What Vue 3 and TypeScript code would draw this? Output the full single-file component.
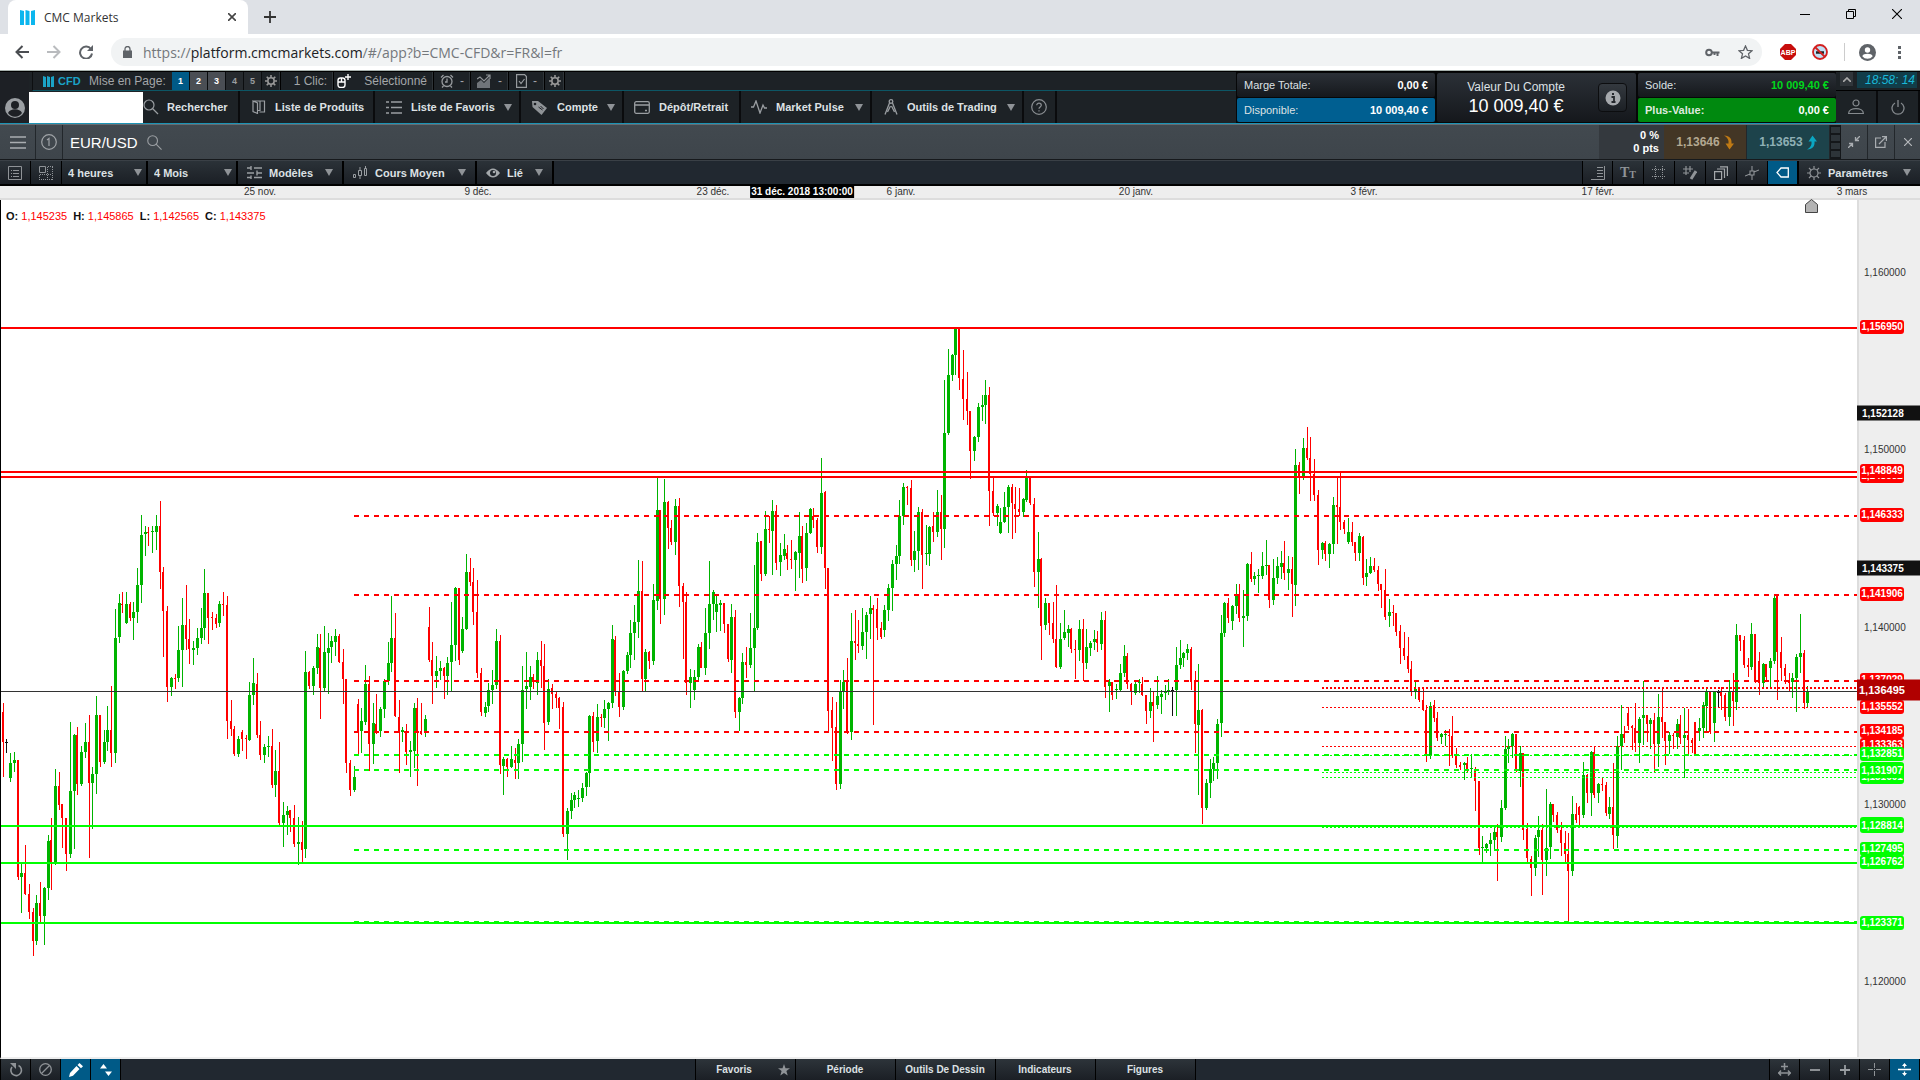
<script setup lang="ts">
import { computed, ref } from 'vue'

type Tone = 'g' | 'r' | 'k'

interface Block {
  x: number
  y: number
  unit: number
  rows: string
}

/* Each row: tone, x, high, body top, body bottom, low. */
const blocks: Block[] = [
  {
    x: 0, y: 450, unit: 3,
    rows: `r 10 759 786 876 981;k 19 867 876 879 909;g 31 909 939 984 996;g 43 906 930 939 966;r 55 930 930 1281 1290;
g 64 1242 1269 1281 1389;r 76 1185 1269 1332 1335;r 88 1302 1332 1386 1407;r 100 1374 1386 1473 1518;g 109 1335 1359 1473 1485;
r 121 1296 1359 1398 1419;g 133 1311 1314 1398 1485;g 145 1155 1173 1314 1350;r 154 1104 1170 1236 1320;g 166 957 1008 1242 1245;
r 178 966 1008 1065 1080;r 187 1062 1062 1104 1194;r 199 1104 1104 1212 1263;g 211 816 1023 1212 1224;g 223 852 855 1023 1197;
r 232 831 855 1002 1035;g 244 888 906 1002 1008;g 256 819 876 906 924;r 268 795 876 999 1224;g 277 951 972 999 1137;
g 289 738 795 972 1032;r 301 795 795 936 951;g 313 840 876 936 942;g 322 768 840 876 903;r 334 708 840 909 951;
g 346 477 564 909 939;g 358 432 459 561 579;r 367 426 462 465 489;g 379 426 462 519 522;r 391 456 462 504 513;
g 400 456 486 504 570;g 412 354 405 486 519;g 424 195 255 405 459;g 436 228 246 252 318;r 445 231 246 249 288;
g 457 228 243 246 309;g 469 195 228 246 300;r 481 153 228 366 417;r 490 351 366 483 621;r 502 468 483 711 756;
g 514 681 684 711 738;r 526 672 684 687 717;g 535 528 600 684 696;g 547 444 525 600 711;r 559 405 525 567 600;
r 568 507 567 597 642;g 580 573 594 600 645;g 592 534 564 594 615;g 604 474 534 564 582;g 613 357 429 534 570;
r 625 429 429 504 582;r 637 486 501 504 540;r 649 492 504 522 534;g 658 453 462 519 531;r 670 426 462 465 498;
r 682 438 465 813 867;r 694 750 813 837 858;r 703 828 837 912 918;g 715 858 867 912 921;r 727 840 846 867 903;
r 739 855 864 867 927;g 748 696 735 870 873;g 760 624 699 735 765;r 772 669 702 855 864;r 781 813 855 915 930;
g 793 882 891 915 939;g 805 858 888 891 921;r 817 837 888 1005 1014;g 826 900 963 1005 1041;r 838 876 963 1119 1125;
g 850 1056 1095 1119 1191;g 862 1068 1083 1095 1155;r 871 1080 1080 1104 1146;r 883 1065 1104 1182 1191;g 895 1101 1176 1182 1245;
r 907 1113 1176 1200 1236;g 916 603 666 1197 1224;r 928 663 666 708 717;g 940 648 654 708 735;g 952 552 591 654 672;
r 961 552 594 714 807;g 973 528 606 714 723;g 985 549 594 609 732;g 994 558 573 591 639;g 1006 537 558 576 618;
r 1018 552 558 636 639;r 1030 597 636 687 762;r 1039 687 687 939 969;r 1051 930 939 1020 1038;g 1063 948 981 1020 1026;
r 1075 747 762 843 915;g 1084 774 813 843 909;g 1096 645 702 816 825;r 1108 678 702 882 963;g 1120 759 819 882 942;
r 1129 732 822 849 852;g 1141 771 777 843 861;g 1153 687 693 777 804;g 1165 576 639 693 705;g 1174 438 564 639 666;
r 1186 489 564 798 801;r 1198 750 801 843 969;g 1207 831 840 846 876;r 1219 822 843 906 945;g 1231 873 900 906 981;
g 1243 759 774 903 954;r 1252 744 774 846 1008;r 1264 759 843 852 855;g 1276 795 807 849 861;r 1288 471 531 630 636;
r 1297 576 630 678 762;g 1309 618 663 678 714;g 1321 633 654 663 690;r 1333 651 654 678 747;g 1342 621 639 678 735;
g 1354 456 585 636 723;g 1366 411 414 585 633;r 1378 414 414 630 645;g 1387 501 537 603 609;g 1399 312 366 537 540;
r 1411 324 366 396 408;r 1420 354 396 486 525;r 1432 390 486 669 684`,
  },
  {
    x: 460, y: 450, unit: 3,
    rows: `r 64 654 669 786 798;g 76 756 771 789 801;g 85 699 720 768 786;g 97 660 705 720 762;g 109 537 573 705 717;
r 121 555 573 945 972;g 130 921 927 948 1035;r 142 924 927 951 981;g 154 888 927 951 954;r 166 894 930 939 987;
g 175 867 882 939 987;g 187 648 720 882 936;g 199 606 708 717 777;g 211 648 681 711 750;r 220 672 681 696 717;
g 232 606 630 699 735;r 244 573 630 648 714;r 253 582 648 819 900;g 265 687 717 816 825;r 277 702 714 732 777;
r 289 726 732 744 774;r 298 741 744 774 837;r 310 756 771 1152 1161;g 322 1074 1083 1152 1230;g 334 1029 1050 1083 1107;
g 343 1026 1035 1050 1074;g 355 1020 1044 1047 1071;g 367 999 1014 1044 1056;g 379 966 969 1011 1038;g 388 795 798 969 1011;
r 400 786 798 876 906;g 412 762 801 873 909;r 424 792 801 804 831;g 433 750 777 804 834;g 445 756 759 777 873;
g 457 525 567 759 774;r 466 558 570 723 738;r 478 669 723 771 801;g 490 660 663 771 780;g 502 606 615 663 672;
g 511 510 549 615 654;g 523 465 516 549 630;g 535 330 423 516 564;r 547 333 423 687 723;g 556 597 606 687 723;
r 568 603 606 633 657;g 580 402 450 633 645;g 592 81 180 453 480;r 601 180 180 447 522;g 613 87 156 447 495;
r 625 153 156 234 297;r 634 210 234 276 285;g 646 147 168 276 315;r 658 144 168 408 471;r 670 399 408 456 627;
r 679 426 456 699 735;g 691 657 681 699 774;g 703 660 681 720 750;g 715 582 591 681 690;r 724 576 591 654 654;
g 736 474 549 654 675;g 748 333 462 549 597;g 760 420 426 462 510;g 769 435 462 486 546;g 781 450 459 465 543;
r 793 459 459 522 549;r 805 522 522 627 636;g 814 462 501 630 669;r 826 480 501 786 804;g 838 741 744 786 843;
g 847 609 636 744 762;r 859 591 636 645 684;g 871 489 594 645 654;g 883 345 534 594 723;g 892 249 276 534 540;
r 904 273 273 372 393;g 916 183 237 372 378;r 928 198 237 240 279;g 937 150 183 243 375;r 949 165 183 339 360;
g 961 279 315 336 378;g 973 252 297 318 330;r 982 285 309 327 360;r 994 270 327 330 357;g 1006 303 306 330 423;
g 1018 186 258 309 384;r 1027 228 258 357 399;g 1039 219 249 354 393;g 1051 174 177 249 252;r 1060 174 198 210 234;
r 1072 204 210 291 309;g 1084 24 129 291 312;r 1096 123 126 354 417;r 1105 354 354 783 846;r 1117 741 780 834 933;
r 1129 756 831 1002 1020;g 1141 690 723 1002 1017;g 1150 660 696 723 777;r 1162 624 696 849 852;g 1174 489 573 846 870;
r 1186 480 573 579 630;r 1195 510 582 588 609;g 1207 474 546 588 600;g 1219 486 495 546 627;g 1231 438 474 492 567;
r 1240 465 474 480 825;r 1252 444 477 534 570;r 1264 516 534 561 567;g 1273 465 480 540 561;g 1285 402 414 480 513;
g 1297 330 342 414 483;g 1309 285 318 342 390;g 1318 150 198 318 342;g 1330 99 111 198 225;r 1342 108 111 114 165;
r 1354 90 114 330 348;g 1363 243 303 330 366;g 1375 171 186 303 360;r 1387 177 186 315 417;g 1399 225 309 312 345;
g 1408 228 231 312 348;r 1420 186 228 246 276;g 1432 120 186 246 261`,
  },
  {
    x: 860, y: 300, unit: 2.904,
    rows: `r 244 566 616 665 755;g 253 232 386 665 720;g 265 142 218 386 392;g 277 157 160 218 235;g 286 81 81 160 218;
r 298 81 81 226 261;r 310 145 229 287 348;r 322 209 287 322 363;r 331 322 322 438 520;g 343 395 398 438 467;
g 355 299 311 398 412;g 367 276 305 311 351;g 376 232 276 305 360;r 388 253 276 555 656;r 400 514 555 618 627;
g 412 592 598 618 656;g 421 604 645 677 679;g 433 558 601 645 648;g 445 537 543 601 677;r 457 534 543 589 694;
r 466 543 592 607 677;r 478 546 607 616 627;g 490 575 578 616 630;g 499 494 514 581 587;r 511 514 514 589 595;
r 523 575 592 790 833;g 535 674 752 790 894;r 544 749 752 947 1045;g 556 865 880 944 958;r 568 880 880 938 973;
r 580 877 938 984 996;r 589 828 984 1066 1069;g 601 938 984 1066 1071;g 613 900 964 981 987;g 625 944 955 967 1008;
r 634 952 955 1013 1025;r 646 987 1013 1016 1101;g 658 929 955 1016 1048;r 670 926 955 1054 1106;g 679 955 1008 1054 1071;
g 691 990 996 1010 1034;g 703 958 984 993 1016;r 712 961 984 996 1022;g 724 906 929 999 1016;r 736 903 929 1124 1156;
g 748 1101 1109 1121 1196;r 757 1109 1109 1147 1161;g 769 1115 1129 1132 1159;g 781 1057 1083 1132 1135;g 793 1002 1034 1083 1095;
r 802 1025 1034 1115 1130;r 814 1112 1115 1138 1176;g 826 1106 1115 1141 1147;g 838 1101 1109 1112 1141;r 847 1095 1115 1147 1150;
r 859 1147 1147 1193 1231;g 871 1127 1167 1193 1214;r 880 1138 1167 1179 1283;g 892 1092 1150 1176 1188;g 904 1132 1144 1153 1202;
g 916 1118 1138 1141 1161;g 925 1101 1132 1135 1147;k 937 1124 1132 1135 1208;g 949 1008 1060 1132 1208;g 961 987 1040 1060 1071;
g 970 1022 1025 1040 1066;g 982 999 1013 1025 1045;r 994 1008 1013 1109 1132;r 1006 1077 1103 1231 1315;g 1015 1057 1191 1234 1437;
r 1027 1188 1191 1475 1522;g 1039 1391 1402 1475 1481;g 1051 1333 1362 1402 1446;g 1060 1327 1344 1362 1397;g 1072 1217 1231 1344 1391;
g 1084 915 967 1228 1269;g 1093 877 880 967 979;r 1105 865 880 923 938;g 1117 886 889 932 958;g 1129 825 857 889 912;
r 1138 825 857 923 935;g 1150 842 918 923 1008;g 1162 764 767 918 932;r 1174 732 767 810 819;g 1183 790 801 810 828;
g 1195 781 799 801 851;g 1207 732 772 801 810;g 1219 697 769 772 799;r 1228 769 769 871 894;g 1240 752 807 871 886;
g 1252 746 772 807 825;g 1264 729 764 775 810;r 1273 700 764 793 813`,
  },
  {
    x: 1280, y: 420, unit: 3,
    rows: `g 25 408 447 459 510;r 37 411 447 492 591;g 46 87 135 495 558;r 58 126 135 171 222;g 70 54 84 171 180;
r 82 21 84 114 120;r 91 51 114 162 243;r 103 117 162 225 243;r 115 210 225 390 435;g 127 366 369 390 417;
r 136 363 369 402 423;g 148 369 372 402 444;g 160 231 255 372 402;r 172 171 255 261 372;r 181 156 261 306 330;
r 193 300 306 327 342;g 205 294 336 366 372;r 217 306 336 366 378;r 226 366 366 399 423;g 238 339 348 399 423;
r 250 348 351 474 495;g 259 417 459 471 498;g 271 411 438 459 462;r 283 414 438 450 456;r 295 438 450 492 513;
r 304 492 492 510 564;r 316 447 510 591 600;g 328 537 576 588 621;r 340 555 576 579 618;r 349 579 579 636 648;
r 361 615 633 684 732;r 373 636 684 708 720;r 385 651 708 747 759;r 394 723 747 813 828;g 406 783 807 813 837;
r 418 801 807 840 846;r 430 801 840 870 873;r 439 855 870 1005 1026;g 451 846 858 1008 1017;r 463 840 855 894 906;
r 472 876 894 954 963;g 484 939 942 951 972;g 496 930 942 945 978;r 508 927 945 948 1038;r 517 888 948 1008 1014;
r 529 984 1008 1035 1044;r 541 1026 1035 1041 1050;g 553 1026 1029 1035 1080;r 562 1011 1029 1050 1056;g 574 1002 1044 1047 1074;
r 586 1041 1050 1083 1173;r 598 1083 1083 1284 1305;g 607 1248 1281 1284 1329;g 619 1269 1272 1284 1299;g 631 1239 1260 1272 1308;
g 643 1221 1236 1260 1287;r 652 1212 1236 1251 1383;g 664 1140 1164 1251 1266;g 676 948 987 1164 1170;g 685 957 978 987 1029;
g 697 939 942 978 1014;r 709 942 942 1050 1056;g 721 978 999 1053 1101;r 730 999 999 1230 1260;r 742 1209 1227 1314 1329;
r 754 1308 1317 1344 1428;g 766 1245 1254 1344 1368;g 775 1188 1230 1251 1311;r 787 1212 1230 1320 1425;g 799 1107 1284 1320 1368;
g 811 1146 1152 1281 1317;r 820 1152 1152 1185 1206;r 832 1176 1185 1230 1239;r 844 1206 1230 1269 1308;r 856 1233 1269 1302 1326;
r 865 1239 1302 1353 1506;g 877 1128 1182 1353 1368;r 889 1149 1182 1200 1209;r 898 1158 1161 1185 1218`,
  },
  {
    x: 1560, y: 480, unit: 3,
    rows: `g 70 846 885 1005 1014;r 82 882 885 939 969;g 94 813 816 939 1008;
r 103 798 816 945 954;g 115 909 912 939 969;r 127 894 912 915 933;r 139 906 915 999 1008;g 148 951 981 1002 1017;
r 160 849 981 1065 1107;g 172 768 798 1068 1104;g 184 675 762 798 870;r 193 738 762 774 789;r 205 681 699 738 750;
r 217 735 738 744 810;r 226 669 744 789 816;g 238 711 717 789 849;g 250 603 705 714 795;r 262 705 705 732 786;
g 271 714 720 732 807;r 283 699 720 792 879;g 295 642 711 792 861;r 307 624 711 726 774;r 316 726 726 783 855;
g 328 756 765 783 822;r 340 759 765 768 807;g 352 717 732 771 807;r 361 705 732 774 792;g 373 684 765 774 894;
r 385 687 765 780 825;r 397 774 780 789 819;r 406 726 726 825 825;g 418 714 744 753 783;g 430 666 675 744 774;
g 439 627 636 678 753;r 451 636 636 756 762;g 463 636 636 729 786;k 475 630 636 639 681;r 484 621 636 648 690;
r 496 639 645 711 723;g 508 600 636 711 738;r 520 579 636 663 738;g 529 432 465 666 690;r 541 465 465 483 513;
r 553 468 480 555 564;r 565 534 555 561 591;g 574 429 462 561 570;r 586 462 462 603 609;r 598 516 543 609 645;
g 610 549 552 609 624;r 619 552 552 591 606;g 631 534 543 564 624;g 643 345 354 543 552;r 652 345 345 516 660;
r 664 471 516 564 603;r 676 552 564 588 612;r 688 579 603 609 636;g 697 579 594 606 654;g 709 522 531 594 696;
g 721 402 519 531 579;r 733 510 519 669 687;g 742 618 636 669 684`,
  },
]

const bar = (x: number, y: number, w: number, h: number) => `M${x} ${y}h${w}v${h}h${-w}z`

const candles = computed(() => {
  const paths: Record<Tone, string> = { g: '', r: '', k: '' }
  for (const b of blocks) {
    for (const row of b.rows.split(';')) {
      const [tone, ...raw] = row.trim().split(' ')
      const n = raw.map(Number)
      const x = b.x + Math.floor(n[0] / 3)
      const [hi, top, bottom, lo] = n.slice(1).map((v) => b.y + Math.round(v / b.unit))
      const t = tone as Tone
      paths[t] += bar(x, hi, 1, Math.max(1, lo - hi))
      paths[t] += bar(x - 1, top, t === 'r' ? 2 : 3, Math.max(1, bottom - top))
    }
  }
  return paths
})

const RED = '#ff0000'
const GREEN = '#00ff00'
const levels = [
  { x: 1, y: 328, w: 2, c: RED, d: '' },
  { x: 1, y: 472, w: 2, c: RED, d: '' },
  { x: 1, y: 477, w: 2, c: RED, d: '' },
  { x: 354, y: 516, w: 2, c: RED, d: '5 5' },
  { x: 354, y: 595, w: 2, c: RED, d: '5 5' },
  { x: 354, y: 681, w: 2, c: RED, d: '5 5' },
  { x: 354, y: 732, w: 2, c: RED, d: '5 5' },
  { x: 1322, y: 688, w: 2, c: RED, d: '2 2' },
  { x: 1322, y: 707.5, w: 1, c: RED, d: '2 2' },
  { x: 1322, y: 746.5, w: 1, c: RED, d: '2 2' },
  { x: 354, y: 755, w: 2, c: GREEN, d: '5 5' },
  { x: 354, y: 770, w: 2, c: GREEN, d: '5 5' },
  { x: 354, y: 850, w: 2, c: GREEN, d: '5 5' },
  { x: 354, y: 922, w: 2, c: GREEN, d: '5 5' },
  { x: 1322, y: 755.5, w: 1, c: GREEN, d: '2 2' },
  { x: 1322, y: 772.5, w: 1, c: GREEN, d: '2 2' },
  { x: 1322, y: 777.5, w: 1, c: GREEN, d: '2 2' },
  { x: 1322, y: 827.5, w: 1, c: GREEN, d: '2 2' },
  { x: 1, y: 826, w: 2, c: GREEN, d: '' },
  { x: 1, y: 863, w: 2, c: GREEN, d: '' },
  { x: 1, y: 923, w: 2, c: GREEN, d: '' },
]

const priceTop = (p: number) => `${(((73 + (1.16 - p) * 17735) / 857) * 100).toFixed(3)}%`
const label = (p: number) => p.toFixed(6).replace('.', ',')
const ticks = [1.16, 1.15, 1.14, 1.13, 1.12]
const tags = [
  { p: 1.15695, k: 'red' },
  { p: 1.148552, k: 'red' },
  { p: 1.148849, k: 'red' },
  { p: 1.146333, k: 'red' },
  { p: 1.141906, k: 'red' },
  { p: 1.137029, k: 'red' },
  { p: 1.135552, k: 'red' },
  { p: 1.134185, k: 'red' },
  { p: 1.133363, k: 'red' },
  { p: 1.132851, k: 'green' },
  { p: 1.131601, k: 'green' },
  { p: 1.132051, k: 'green' },
  { p: 1.131907, k: 'green' },
  { p: 1.128914, k: 'green' },
  { p: 1.128814, k: 'green' },
  { p: 1.127495, k: 'green' },
  { p: 1.126762, k: 'green' },
  { p: 1.123371, k: 'green' },
  { p: 1.152128, k: 'black' },
  { p: 1.143375, k: 'black' },
  { p: 1.136495, k: 'last' },
]

const dates = [
  { t: '25 nov.', x: 260 },
  { t: '9 déc.', x: 478 },
  { t: '23 déc.', x: 713 },
  { t: '6 janv.', x: 901 },
  { t: '20 janv.', x: 1136 },
  { t: '3 févr.', x: 1364 },
  { t: '17 févr.', x: 1598 },
  { t: '3 mars', x: 1852 },
]
const pct = (x: number) => `${((x / 1920) * 100).toFixed(3)}%`

const page = ref(1)
const period = ref('4 heures')
const span = ref('4 Mois')
const ohlc = [
  ['O:', '1,145235'],
  ['H:', '1,145865'],
  ['L:', '1,142565'],
  ['C:', '1,143375'],
]
const teeth = 'M7 0v3M7 11v3M0 7h3M11 7h3M2 2l2.2 2.2M9.8 9.8L12 12M12 2L9.8 4.2M4.2 9.8L2 12'
</script>

<template>
  <div class="page">
    <header class="browser">
      <div class="tabs">
        <div class="tab">
          <svg width="15" height="15" viewBox="0 0 15 15"><path d="M0 0l4 1v14H0zM5.5 0l4 1v14h-4zM11 1l4-1v15h-4z" fill="#0cb6ee" /></svg>
          <span class="tab-name">CMC Markets</span>
          <button class="plain" aria-label="Fermer l’onglet"><svg width="8" height="8" viewBox="0 0 8 8"><path d="M0 0l8 8M8 0L0 8" stroke="#444" stroke-width="1.6" /></svg></button>
        </div>
        <button class="plain newtab" aria-label="Nouvel onglet"><svg width="12" height="12" viewBox="0 0 12 12"><path d="M6 0v12M0 6h12" stroke="#333" stroke-width="1.8" /></svg></button>
        <div class="winctl">
          <button class="plain" aria-label="Réduire"><svg width="10" height="10" viewBox="0 0 10 10"><path d="M0 5.500h10" stroke="#000" /></svg></button>
          <button class="plain" aria-label="Restaurer"><svg width="10" height="10" viewBox="0 0 10 10"><path d="M.5 2.500h7v7h-7zM2.500 2.500v-2h7v7h-2" fill="none" stroke="#000" /></svg></button>
          <button class="plain" aria-label="Fermer"><svg width="10" height="10" viewBox="0 0 10 10"><path d="M0 0l10 10M10 0L0 10" stroke="#000" stroke-width="1.1" /></svg></button>
        </div>
      </div>
      <div class="address">
        <button class="plain" aria-label="Précédent"><svg width="14" height="14" viewBox="0 0 14 14"><path d="M14 7H1.500M7.500 1L1.500 7l6 6" fill="none" stroke="#4a4d51" stroke-width="2" /></svg></button>
        <button class="plain" aria-label="Suivant"><svg width="14" height="14" viewBox="0 0 14 14"><path d="M0 7h12.500M6.500 1l6 6-6 6" fill="none" stroke="#b9bbbe" stroke-width="2" /></svg></button>
        <button class="plain" aria-label="Actualiser"><svg width="14" height="14" viewBox="0 0 14 14"><path d="M12 4.200A6 6 0 1 0 13 8.500" fill="none" stroke="#5f6368" stroke-width="2" /><path d="M14 0v6H8z" fill="#5f6368" /></svg></button>
        <div class="url">
          <svg width="9" height="12" viewBox="0 0 9 12"><path d="M0 4.500h9V12H0z" fill="#5f6368" /><path d="M2 5V3a2.500 2.500 0 0 1 5 0v2" fill="none" stroke="#5f6368" stroke-width="1.3" /></svg>
          <span class="link">https://<b>platform.cmcmarkets.com</b>/#/app?b=CMC-CFD&amp;r=FR&amp;l=fr</span>
          <svg width="15" height="9" viewBox="0 0 15 9"><circle cx="4" cy="4.500" r="2.800" fill="none" stroke="#5f6368" stroke-width="2" /><path d="M7 4.500h7.500M12.500 4.500v3.500M9.500 4.500V7" stroke="#5f6368" stroke-width="2" /></svg>
          <svg width="15" height="14" viewBox="0 0 15 14"><path d="M7.500 1l1.900 4.300 4.600.4-3.500 3.100 1.100 4.600-4.100-2.500-4.100 2.500 1.100-4.600L1 5.700l4.600-.4z" fill="none" stroke="#5f6368" stroke-width="1.3" /></svg>
        </div>
        <div class="ext">
          <svg width="16" height="16" viewBox="0 0 16 16"><path d="M5 0h6l5 5v6l-5 5H5l-5-5V5z" fill="#c70d0c" /><text x="8" y="11" font-size="7" font-weight="700" fill="#fff" text-anchor="middle" font-family="Liberation Sans, sans-serif">ABP</text></svg>
          <svg width="16" height="16" viewBox="0 0 16 16"><circle cx="8" cy="8" r="7" fill="#bfe0f5" stroke="#d32020" stroke-width="1.8" /><path d="M4 8.500h8" stroke="#222" stroke-width="2.5" /><path d="M3 3l10 10" stroke="#d32020" stroke-width="1.8" /></svg>
          <i class="vline"></i>
          <svg class="avatar" width="17" height="17" viewBox="0 0 17 17"><circle cx="8.500" cy="8.500" r="8.500" fill="#5f6368" /><circle cx="8.500" cy="6" r="2.700" fill="#fff" /><path d="M3.300 12.200c1-3.200 9.400-3.200 10.400 0a6.500 6.500 0 0 1-10.400 0z" fill="#fff" /></svg>
          <svg width="3" height="13" viewBox="0 0 3 13"><path d="M0 0h3v3H0zM0 5h3v3H0zM0 10h3v3H0z" fill="#5f6368" /></svg>
        </div>
      </div>
    </header>

    <section class="app-head">
      <div class="user"><svg width="20" height="20" viewBox="0 0 20 20"><circle cx="10" cy="10" r="10" fill="#9b9fa3" /><circle cx="10" cy="7" r="4" fill="#1d2025" /><path d="M3 15c2-5 12-5 14 0a8.500 8.500 0 0 1-14 0z" fill="#1d2025" /></svg></div>
      <div class="head-main">
        <div class="row1">
          <svg class="cmc" width="11" height="11" viewBox="0 0 11 11"><path d="M0 0l3 1v10H0zM4 0l3 1v10H4zM8 1l3-1v11H8z" fill="#1ba3c6" /></svg>
          <span class="cfd">CFD</span>
          <span class="mise">Mise en Page:</span>
          <button v-for="n in 5" :key="n" class="pg" :class="{ on: n === page, mid: n === 2 || n === 3 }" @click="page = n">{{ n }}</button>
          <span class="cell w19"><svg width="12" height="12" viewBox="0 0 14 14" fill="none" stroke="#999" stroke-width="1.8"><circle cx="7" cy="7" r="3.700" /><path :d="teeth" /></svg></span>
          <span class="cell txt w53">1 Clic:</span>
          <span class="mouse"><svg width="14" height="14" viewBox="0 0 14 14"><rect x="1" y="4" width="7" height="9.500" rx="2.500" fill="none" stroke="#fff" stroke-width="1.4" /><path d="M1 8h7M4.500 4v4M11 0v6M8 3h6" stroke="#fff" stroke-width="1.4" /></svg></span>
          <span class="cell txt w80">Sélectionné</span>
          <span class="cell w37"><svg width="14" height="14" viewBox="0 0 14 14" fill="none" stroke="#979b9e" stroke-width="1.3"><circle cx="7" cy="7.500" r="5" /><path d="M7 4.500V8H5M1 3.500L3.500 1M13 3.500L10.500 1M3.500 12L2 13.500M10.500 12l1.500 1.500" /></svg>-</span>
          <span class="cell w38"><svg width="15" height="14" viewBox="0 0 15 14"><path d="M0 14v-5l4-3 3 3 5-5 1 1v9z" fill="#70757a" /><path d="M0 5l3-2 4 4 6-6M9 1h4v4" fill="none" stroke="#8d9194" stroke-width="1.2" /></svg>-</span>
          <span class="cell w36"><svg width="11" height="14" viewBox="0 0 11 14" fill="none" stroke="#979b9e" stroke-width="1.2"><path d="M.6.6h8l1.800 2v10.800H.6zM3 7l2 2.500L8.500 5" /></svg>-</span>
          <span class="cell w20"><svg width="12" height="12" viewBox="0 0 14 14" fill="none" stroke="#999" stroke-width="1.8"><circle cx="7" cy="7" r="3.700" /><path :d="teeth" /></svg></span>
        </div>
        <nav class="row2">
          <div class="blank"></div>
          <button class="nav n1"><svg width="16" height="16" viewBox="0 0 16 16" fill="none" stroke="#9a9ea2" stroke-width="1.2"><circle cx="6" cy="6" r="5" /><path d="M9.500 9.500L15 15" /></svg>Rechercher</button>
          <button class="nav n2"><svg width="14" height="14" viewBox="0 0 14 14" fill="none" stroke="#9a9ea2" stroke-width="1.2"><path d="M1 1l4.500 2v10.500L1 11.500zM1 1h7v9.500H6M8 1h4.500v11H7.500" /></svg>Liste de Produits</button>
          <button class="nav n3"><svg width="16" height="13" viewBox="0 0 16 13"><path d="M0 1h3M5 1h11M0 6.500h3M5 6.500h11M0 12h3M5 12h11" stroke="#9a9ea2" stroke-width="1.4" /></svg>Liste de Favoris<i class="arr"></i></button>
          <button class="nav n4"><svg width="17" height="15" viewBox="0 0 17 15"><path d="M1 1h6l9 7-5.500 7L1.500 7z" fill="#8f9397" /><circle cx="4" cy="4" r="1.300" fill="#1d2025" /><path d="M7.500 7l4 3M9.500 6l3 3" stroke="#1d2025" /></svg>Compte<i class="arr"></i></button>
          <button class="nav n5"><svg width="16" height="13" viewBox="0 0 16 13" fill="none" stroke="#9a9ea2" stroke-width="1.3"><rect x=".7" y=".7" width="14.600" height="11.600" rx="1.500" /><path d="M1 4h14M11 9.500h2" /></svg>Dépôt/Retrait</button>
          <button class="nav n6"><svg width="16" height="14" viewBox="0 0 16 14" fill="none" stroke="#9a9ea2" stroke-width="1.3"><path d="M0 7h2.500L5 1l4 12 3-8 1.500 3H16" /></svg>Market Pulse<i class="arr"></i></button>
          <button class="nav n7"><svg width="14" height="16" viewBox="0 0 14 16" fill="none" stroke="#9a9ea2" stroke-width="1.3"><circle cx="7" cy="2.500" r="1.800" /><path d="M5.500 4L1 15.500M8.500 4L13 15.500M6.500 7L3.500 13M7.500 7l3 6" /></svg>Outils de Trading<i class="arr"></i></button>
          <button class="nav n8" aria-label="Aide"><svg width="16" height="16" viewBox="0 0 16 16" fill="none" stroke="#8a8e92" stroke-width="1.2"><circle cx="8" cy="8" r="7.300" /><path d="M5.700 6.300c0-3 4.600-3 4.600 0C10.300 8 8 8 8 9.800M8 11.200v1.300" /></svg></button>
        </nav>
      </div>
      <div class="account">
        <div class="pair">
          <div class="box"><span>Marge Totale:</span><b>0,00 €</b></div>
          <div class="box blue"><span>Disponible:</span><b>10 009,40 €</b></div>
        </div>
        <div class="value">
          <div class="value-txt"><span>Valeur Du Compte</span><strong>10 009,40 €</strong></div>
          <button class="info" aria-label="Informations"><svg width="16" height="16" viewBox="0 0 16 16"><circle cx="8" cy="8" r="7.500" fill="#a6a9ad" /><path d="M6.500 7H9v5M6.500 12h4M7 4h2" stroke="#25282d" stroke-width="1.8" fill="none" /></svg></button>
        </div>
        <div class="pair">
          <div class="box"><span>Solde:</span><b class="pos">10 009,40 €</b></div>
          <div class="box grn"><b class="soft">Plus-Value:</b><b>0,00 €</b></div>
        </div>
      </div>
      <div class="sys">
        <div class="sys-top">
          <button class="up" aria-label="Replier"><svg width="8" height="5" viewBox="0 0 8 5"><path d="M0 5l4-4 4 4" fill="none" stroke="#aaa" stroke-width="1.6" /></svg></button>
          <time class="clock">18:58: 14</time>
        </div>
        <div class="sys-bot">
          <button aria-label="Profil"><svg width="16" height="16" viewBox="0 0 16 16" fill="none" stroke="#858a8e" stroke-width="1.2"><circle cx="8" cy="4" r="3" /><path d="M.6 14.500c0-6.500 14.800-6.500 14.800 0z" /></svg></button>
          <button aria-label="Déconnexion"><svg width="14" height="15" viewBox="0 0 14 15" fill="none" stroke="#858a8e" stroke-width="1.3"><path d="M7 0v7M4 3a6 6 0 1 0 6 0" /></svg></button>
        </div>
      </div>
    </section>

    <section class="title">
      <button class="sq w36" aria-label="Menu"><svg width="16" height="13" viewBox="0 0 16 13"><path d="M0 1h16M0 6.500h16M0 12h16" stroke="#a9adb1" stroke-width="1.6" /></svg></button>
      <button class="sq w27" aria-label="Groupe 1"><svg width="16" height="16" viewBox="0 0 16 16" fill="none" stroke="#a0a4a8" stroke-width="1.2"><circle cx="8" cy="8" r="7.300" /><path d="M6 6l2-1.500V12" /></svg></button>
      <h1>EUR/USD</h1>
      <svg class="find" width="15" height="15" viewBox="0 0 16 16" fill="none" stroke="#9a9ea2" stroke-width="1.2"><circle cx="6" cy="6" r="5.200" /><path d="M9.700 9.700L15.500 15.500" /></svg>
      <div class="pts"><span>0 %</span><span>0 pts</span></div>
      <button class="price sell">1,13646<svg width="10" height="15" viewBox="0 0 10 14"><path d="M0 0c6 .5 8 3.500 7.500 8H10l-4.500 6L1.500 8h3C5 4.500 3.500 2 0 0z" fill="#c07a14" /></svg></button>
      <button class="price buy">1,13653<svg width="10" height="15" viewBox="0 0 10 14"><path d="M0 14c6-.5 8-3.500 7.500-8H10L5.500 0l-4 6h3c.5 3.500-1 6-4.500 8z" fill="#0ba6c2" /></svg></button>
      <div class="dots"><i></i><i></i><i></i><i></i></div>
      <button class="sq w27" aria-label="Réduire le module"><svg width="12" height="12" viewBox="0 0 12 12" fill="none" stroke="#a9adb1" stroke-width="1.3"><path d="M12 0L8 4M7.500 1v3.500H11M0 12l4-4M1 7.500h3.500V11" /></svg></button>
      <button class="sq w27" aria-label="Détacher"><svg width="12" height="12" viewBox="0 0 12 12" fill="none" stroke="#a9adb1" stroke-width="1.2"><path d="M6 2H.6v9.400H10V6M4 8l7-7M7 .6h4.400V5" /></svg></button>
      <button class="sq w25" aria-label="Fermer le module"><svg width="8" height="8" viewBox="0 0 8 8"><path d="M0 0l8 8M8 0L0 8" stroke="#b5b8bb" stroke-width="1.2" /></svg></button>
    </section>

    <section class="tools">
      <button class="t w31" aria-label="Liste"><svg width="14" height="14" viewBox="0 0 14 14" fill="none" stroke="#8f9397"><path d="M.5.5h13v13H.5zM3 4.500h1M5 4.500h6M3 7.500h1M5 7.500h6M3 10.500h1M5 10.500h6" /></svg></button>
      <button class="t w31" aria-label="Grille"><svg width="14" height="14" viewBox="0 0 14 14" fill="none" stroke="#8f9397"><path d="M.5.5h6v6h-6z" /><path d="M9 .5h5M13.500 1v13M.5 9v5M0 13.500h14M8.500 1v12M1 8.500h12" stroke-dasharray="1 1" /></svg></button>
      <label class="t sel w86"><select v-model="period" aria-label="Intervalle"><option>4 heures</option><option>1 jour</option></select><i class="arr"></i></label>
      <label class="t sel w90"><select v-model="span" aria-label="Durée"><option>4 Mois</option><option>6 Mois</option></select><i class="arr"></i></label>
      <button class="t pad w106"><svg width="15" height="13" viewBox="0 0 15 13" fill="none" stroke="#9a9ea2" stroke-width="1.4"><path d="M0 2h4M4 0v4M7 2h8M0 7h7M10 7h5M10 4.500v5M0 11.500h4M4 9.500V13M7 11.500h8" /></svg>Modèles<i class="arr"></i></button>
      <button class="t pad w133"><svg width="15" height="13" viewBox="0 0 15 13" fill="none" stroke="#9a9ea2"><path d="M.5 8.500h2v3h-2zM5.500 4.500h3v5h-3zM7 1v3.500M7 9.500V13M11.500 2.500h2v7h-2zM12.500 0v2" /></svg>Cours Moyen<i class="arr"></i></button>
      <button class="t pad w77"><svg width="14" height="10" viewBox="0 0 14 10"><path d="M0 5q7-9 14 0-7 9-14 0z" fill="#a4a8ab" /><circle cx="7" cy="5" r="3" fill="#1f252b" /><circle cx="8" cy="4" r="1.300" fill="#a4a8ab" /></svg>Lié<i class="arr"></i></button>
      <span class="grow"></span>
      <button class="t w31 bl" aria-label="Échelle"><svg width="14" height="14" viewBox="0 0 14 14" fill="none" stroke="#8f9397"><path d="M13.500 0v13.500H0M6 1.500h6M6 4.500h6M6 7.500h6M6 10.500h6" /></svg></button>
      <button class="t w31 serif" aria-label="Texte">T<small>T</small></button>
      <button class="t w31" aria-label="Quadrillage"><svg width="14" height="14" viewBox="0 0 14 14" fill="none" stroke="#8f9397" stroke-dasharray="1 1"><path d="M3.500 0v14M10.500 0v14M0 3.500h14M0 10.500h14" /></svg></button>
      <button class="t w31" aria-label="Dessin"><svg width="14" height="14" viewBox="0 0 14 14" fill="none" stroke="#8f9397" stroke-width="1.2"><path d="M3 0v9M7 0v6M0 3h10M0 7h6" /><path d="M13 5l-5 8" stroke-width="3" /></svg></button>
      <button class="t w31" aria-label="Calques"><svg width="14" height="14" viewBox="0 0 14 14" fill="none" stroke="#a4a8ab" stroke-width="1.2"><path d="M.6 5.600h7v8h-7zM3 3h7.500v9M6 .8h7.400V10" /></svg></button>
      <button class="t w31" aria-label="Repère"><svg width="14" height="14" viewBox="0 0 14 14" fill="none" stroke="#8f9397" stroke-width="1.1"><path d="M5 5h4v4H5zM7 0v5M7 9v5M0 10l5-2M9 6l5-2" /></svg></button>
      <button class="t w31 act" aria-label="Étiquette"><svg width="13" height="11" viewBox="0 0 13 11" fill="none" stroke="#fff" stroke-width="1.3"><path d="M5 1h7.300v9H5L1 5.500z" /></svg></button>
      <button class="t pad params"><svg width="14" height="14" viewBox="0 0 14 14" fill="none" stroke="#8f9397" stroke-width="1.2"><circle cx="7" cy="7" r="4" /><path :d="teeth" /></svg>Paramètres<i class="arr"></i></button>
    </section>

    <div class="dates">
      <span v-for="d in dates" :key="d.t" :style="{ left: pct(d.x) }">{{ d.t }}</span>
      <b :style="{ left: pct(802) }">31 déc. 2018 13:00:00</b>
    </div>

    <main class="chart">
      <div class="plot">
        <svg class="canvas" viewBox="1 200 1856 857" preserveAspectRatio="none" shape-rendering="crispEdges" role="img" aria-label="Cours EUR/USD">
          <path :d="candles.g" fill="#00b400" />
          <path :d="candles.r" fill="#ff0000" />
          <path :d="candles.k" fill="#111" />
          <line v-for="(l, i) in levels" :key="i" :x1="l.x" x2="1857" :y1="l.y" :y2="l.y" :stroke="l.c" :stroke-width="l.w" :stroke-dasharray="l.d || undefined" />
          <line x1="1" x2="1857" y1="691.5" y2="691.5" stroke="#333" />
        </svg>
        <p class="ohlc"><span v-for="o in ohlc" :key="o[0]"><b>{{ o[0] }}</b> {{ o[1] }}</span></p>
        <svg class="home" width="13" height="14" viewBox="0 0 13 14"><path d="M.5 13.500V5.500l6-5 6 5v8z" fill="#b4b4b4" stroke="#444" /></svg>
      </div>
      <div class="axis">
        <span v-for="p in ticks" :key="p" class="tick" :style="{ top: priceTop(p) }">{{ label(p) }}</span>
        <span v-for="g in tags" :key="g.p" class="tag" :class="g.k" :style="{ top: priceTop(g.p) }">{{ label(g.p) }}</span>
      </div>
    </main>

    <footer class="foot">
      <div class="grp">
        <button aria-label="Rétablir"><svg width="14" height="14" viewBox="0 0 14 14"><path d="M9.500 2.500A5.300 5.300 0 1 1 3 4" fill="none" stroke="#8f9397" stroke-width="1.6" /><path d="M1 0h6v6z" fill="#8f9397" /></svg></button>
        <button aria-label="Aucun"><svg width="13" height="13" viewBox="0 0 13 13" fill="none" stroke="#8f9397" stroke-width="1.3"><circle cx="6.500" cy="6.500" r="5.800" /><path d="M2.500 10.500l8-8" /></svg></button>
        <button class="act" aria-label="Crayon"><svg width="14" height="14" viewBox="0 0 14 14"><path d="M0 14l1-4 6.500-7 3 3L4 12.800zM8.500 2L10.500 0 14 3.300 12 5.300z" fill="#fff" /></svg></button>
        <button class="act" aria-label="Déplacer"><svg width="12" height="12" viewBox="0 0 12 12"><path d="M0 4.500L3.500 0 7 4.500zM5 7.500h7L8.500 12z" fill="#fff" /></svg></button>
      </div>
      <div class="grp center">
        <button>Favoris<svg class="star" width="12" height="12" viewBox="0 0 12 12"><path d="M6 0l1.500 4.300H12L8.400 7 9.700 11.600 6 8.900l-3.700 2.700L3.600 7 0 4.300h4.500z" fill="#8f9397" /></svg></button>
        <button>Période</button>
        <button>Outils De Dessin</button>
        <button>Indicateurs</button>
        <button>Figures</button>
      </div>
      <div class="grp right">
        <button aria-label="Ajuster"><svg width="13" height="13" viewBox="0 0 13 13" fill="none" stroke="#8f9397" stroke-width="1.5"><path d="M6.500 0v7M3 3.500h7M0 10h13M3 7.500L.8 10 3 12.500M10 7.500l2.200 2.500-2.200 2.500" /></svg></button>
        <button aria-label="Zoom arrière"><svg width="10" height="10" viewBox="0 0 10 10"><path d="M0 5h10" stroke="#9a9ea2" stroke-width="1.8" /></svg></button>
        <button aria-label="Zoom avant"><svg width="10" height="10" viewBox="0 0 10 10"><path d="M0 5h10M5 0v10" stroke="#9a9ea2" stroke-width="1.8" /></svg></button>
        <button aria-label="Réticule"><svg width="13" height="13" viewBox="0 0 13 13"><path d="M0 6.500h5M8 6.500h5M6.500 0v5M6.500 8v5M6 6.500h1" stroke="#8f9397" /></svg></button>
        <button class="act" aria-label="Échelle auto"><svg width="13" height="13" viewBox="0 0 13 13"><path d="M0 6.500h13M6.500 1v3.500M6.500 8.500V12" stroke="#fff" stroke-width="1.3" /><path d="M6.500 0L9 3H4zM6.500 13L4 10h5z" fill="#fff" /></svg></button>
      </div>
    </footer>
  </div>
</template>

<style scoped>
.page {
  display: flex;
  flex-direction: column;
  min-height: 100vh;
  background: #fff;
  font-family: 'Liberation Sans', Arial, sans-serif;
  font-size: 11px;
  color: #dde1e4;
}
button {
  border: 0;
  margin: 0;
  padding: 0;
  background: none;
  color: inherit;
  font: inherit;
}
svg { flex: none; display: block; }
.plain { display: flex; }

/* browser chrome */
.browser { font-family: 'Open Sans', 'Noto Sans', sans-serif; color: #333; }
.tabs { display: flex; height: 34px; background: #dee1e6; align-items: center; }
.tab {
  display: flex;
  flex: none;
  align-items: center;
  align-self: stretch;
  width: 240px;
  box-sizing: border-box;
  margin-left: 8px;
  padding: 0 12px;
  border-radius: 8px 8px 0 0;
  background: #fff;
  font-size: 12px;
}
.tab-name { flex: 1; margin-left: 9px; }
.newtab { flex: none; margin-left: 16px; }
.winctl { display: flex; gap: 36px; margin: 0 18px 6px auto; }
.address { display: flex; align-items: center; height: 36px; padding: 0 19px 0 15px; border-bottom: 1px solid #a7b1ad; gap: 18px; }
.url {
  display: flex;
  align-items: center;
  flex: 1;
  height: 28px;
  padding: 0 9px 0 12px;
  border-radius: 14px;
  background: #f1f3f4;
  font-size: 14px;
  color: #74787c;
  gap: 18px;
}
.link { flex: 1; margin-left: -7px; }
.link b { font-weight: 400; color: #202124; }
.ext { display: flex; align-items: center; gap: 16px; }
.avatar { margin: 0 6px 0 -2px; }
.vline { width: 1px; height: 18px; background: #ccc; }

/* platform header */
.app-head { display: flex; height: 51px; background: #1d2226; border-top: 1px solid #000; border-bottom: 1px solid #1d93b4; }
.user { display: flex; width: 29px; flex: none; justify-content: flex-end; align-items: flex-end; padding: 0 4px 5px 0; box-sizing: border-box; background: #1d2025; }
.head-main { display: flex; flex-direction: column; flex: 1; min-width: 0; }
.row1 { display: flex; height: 18px; align-items: center; margin-left: 3px; border-bottom: 1px solid #0c5665; color: #a3a6a9; font-size: 12px; border-left: 1px solid #0d0f11; }
.cmc { margin-left: 10px; }
.cfd { width: 31px; margin-left: 4px; color: #1ba3c6; font-size: 11px; font-weight: 700; }
.mise { width: 83px; white-space: nowrap; }
.pg { width: 18px; height: 18px; border-right: 1px solid #0b0d0f; font-size: 9px; font-weight: 700; color: #9a9da0; background: #262a2e; }
.pg.mid { background: #4a4e54; color: #fff; }
.pg.on { background: #005a87; color: #fff; }
.cell { display: flex; height: 18px; box-sizing: border-box; align-items: center; justify-content: center; gap: 6px; border-right: 1px solid #000; box-shadow: inset -1px 0 #2e3438; white-space: nowrap; }
.cell.txt { justify-content: flex-end; padding-right: 6px; }
.w19 { width: 19px; }
.w20 { width: 20px; }
.w36 { width: 36px; }
.w37 { width: 37px; }
.w38 { width: 38px; }
.w53 { width: 53px; }
.w80 { width: 80px; }
.mouse { width: 20px; padding-left: 3px; box-sizing: border-box; }
.row2 { display: flex; flex: 1; align-items: stretch; font-weight: 700; }
.blank { width: 114px; background: #fff; margin-top: 1px; }
.nav { display: flex; align-items: center; border-right: 2px solid #0a0b0d; box-sizing: border-box; white-space: nowrap; }
.nav svg { margin-right: 9px; }
.nav .arr { margin-left: auto; margin-right: 7px; }
.n1 { width: 97px; }
.n2 { width: 135px; padding-left: 12px; }
.n3 { width: 146px; padding-left: 11px; }
.n4 { width: 103px; padding-left: 10px; }
.n5 { width: 117px; padding-left: 10px; }
.n6 { width: 131px; padding-left: 10px; }
.n7 { width: 152px; padding-left: 12px; }
.n8 { width: 33px; padding-left: 7px; }
.n1 svg { margin-right: 8px; }
.n8 svg { margin: 0; }
.arr { width: 0; height: 0; border: 4px solid transparent; border-top: 7px solid #8f9397; border-bottom: 0; }
.account { display: flex; gap: 2px; width: 600px; flex: none; padding: 1px 0 1px 0; background: #060708; }
.pair { display: flex; flex-direction: column; gap: 1px; width: 198px; }
.pair:first-child { margin-left: 1px; }
.box { display: flex; flex: 1; align-items: center; justify-content: space-between; padding: 0 7px; border-radius: 2px; background: linear-gradient(#2b3037, #15181c); }
.box b { color: #fff; }
.box .soft { color: #dfe9df; }
.box .pos { color: #00d81c; }
.blue { background: #005f91; }
.grn { background: #00890f; }
.value { display: flex; flex: 1; align-items: center; justify-content: flex-end; border-radius: 2px; background: linear-gradient(#2b3037, #15181c); }
.value-txt { display: flex; flex-direction: column; align-items: center; gap: 2px; margin-right: 33px; font-size: 12px; }
.value-txt strong { font-size: 18px; font-weight: 400; line-height: 20px; color: #fff; }
.info { display: flex; align-items: center; justify-content: center; width: 29px; height: 29px; margin-right: 9px; border-radius: 4px; border: 1px solid #0c0d0f; background: linear-gradient(#34393f, #1c2025); box-sizing: border-box; }
.sys { display: flex; flex-direction: column; width: 84px; flex: none; }
.sys-top { display: flex; justify-content: space-between; height: 18px; padding: 0 3px 0 4px; border-bottom: 1px solid #000; }
.up { display: flex; align-items: center; justify-content: center; width: 13px; height: 14px; background: #30353a; }
.clock { width: 58px; height: 16px; padding-right: 2px; background: #123d49; color: #19b8d8; font-size: 12px; line-height: 17px; font-style: italic; text-align: right; }
.sys-bot { display: flex; flex: 1; }
.sys-bot button { display: flex; flex: 1; align-items: center; justify-content: center; border-right: 2px solid #0a0b0d; }

/* instrument title */
.title { display: flex; height: 34px; align-items: stretch; border-top: 1px solid #666c72; border-bottom: 1px solid #16191c; background: linear-gradient(#42494f, #3e454b); }
.sq { display: flex; align-items: center; justify-content: center; border-right: 1px solid #22272b; box-sizing: border-box; }
.w25 { width: 25px; border: 0; }
.w27 { width: 27px; }
h1 { margin: 0 0 0 7px; align-self: center; font-size: 15px; font-weight: 400; color: #fff; }
.find { margin: 0 auto 0 9px; align-self: center; }
.pts { display: flex; flex-direction: column; justify-content: center; align-items: flex-end; width: 65px; padding-right: 5px; box-sizing: border-box; background: #34393e; color: #fff; font-weight: 700; line-height: 13px; }
.price { display: flex; align-items: center; justify-content: center; gap: 4px; width: 83px; font-size: 12px; font-weight: 700; border-right: 1px solid #22272b; box-sizing: border-box; }
.sell { background: #433625; color: #b3a891; }
.buy { background: #1d434b; color: #8fb0b5; }
.dots { display: flex; flex-direction: column; justify-content: space-around; width: 11px; padding: 1px 0; background: #14171a; }
.dots i { height: 6px; margin: 0 1px; background: #2d3439; }

/* chart toolbar */
.tools { display: flex; height: 23px; border-top: 1px solid #3a4046; border-bottom: 2px solid #000; background: #212830; font-weight: 700; }
.t { display: flex; align-items: center; justify-content: center; flex: none; box-sizing: border-box; border-right: 2px solid #000; background: linear-gradient(#2b3238, #1b1f25); white-space: nowrap; }
.bl { border-left: 1px solid #000; }
.t .arr { margin-left: auto; margin-right: 4px; }
.w31 { width: 31px; }
.w31:not(.act) { border-right-width: 1px; }
.sel { padding-left: 6px; }
.sel select { flex: 1; border: 0; padding: 0; background: none; color: inherit; font: inherit; appearance: none; outline: none; }
.pad { padding-left: 9px; }
.pad svg { margin-right: 7px; }
.pad .arr { margin-right: 9px; }
.w77 { width: 77px; }
.w86 { width: 86px; }
.w90 { width: 90px; }
.w106 { width: 106px; }
.w133 { width: 133px; }
.params { width: 121px; padding-left: 8px; border: 0; }
.grow { flex: 1; }
.act { background: #005a87; }
.serif { font-family: 'Liberation Serif', serif; font-size: 14px; color: #8f9397; }
.serif small { font-size: 10px; padding-top: 3px; }

/* time axis */
.dates { position: relative; height: 12px; border-bottom: 2px solid #ddd; background: #eee; color: #333; font-size: 10px; line-height: 12px; }
.dates span, .dates b { position: absolute; top: 0; transform: translateX(-50%); white-space: nowrap; }
.dates b { padding: 0 1px; background: #000; color: #fff; }

/* chart */
.chart { display: flex; flex: 1; min-height: 400px; border-left: 1px solid #000; border-bottom: 2px solid #eee; }
.plot { position: relative; flex: 1; min-width: 0; }
.canvas { position: absolute; inset: 0; width: 100%; height: 100%; }
.ohlc { position: absolute; top: 9px; left: 5px; display: flex; gap: 6px; margin: 0; color: #f00; line-height: 14px; }
.ohlc b { color: #111; }
.home { position: absolute; top: -1px; right: 39px; }
.axis { position: relative; width: 61px; border-left: 2px solid #ddd; background: #eee; }
.tick { position: absolute; left: 5px; transform: translateY(-50%); color: #333; font-size: 10px; line-height: 12px; }
.tag { position: absolute; left: 1px; width: 44px; height: 14px; transform: translateY(-50%); border-radius: 3px; color: #fff; font-size: 10px; font-weight: 700; line-height: 14px; text-align: center; }
.red { background: #f00; }
.green { background: #0f0; }
.black, .last { left: -2px; width: 63px; box-sizing: border-box; border-radius: 0; text-align: left; }
.black { height: 15px; padding-left: 5px; background: #111; line-height: 15px; }
.last { height: 21px; padding-left: 2px; background: #b00000; font-size: 11px; line-height: 21px; }

/* bottom bar */
.foot { display: flex; height: 21px; justify-content: space-between; border-left: 1px solid #000; background: #212830; font-size: 10px; font-weight: 700; }
.grp { display: flex; }
.grp button { display: flex; position: relative; align-items: center; justify-content: center; width: 30px; box-sizing: border-box; border-right: 1px solid #000; background: linear-gradient(#2d343a, #1b1f25); }
.grp .act { background: #005a87; }
.center, .right { border-left: 1px solid #000; }
.grp.center button { width: 100px; padding-right: 22px; }
.grp.center button:not(:first-child) { padding-right: 0; }
.star { position: absolute; right: 5px; top: 5px; }
</style>

<style>
body { background: #fff; }
</style>
